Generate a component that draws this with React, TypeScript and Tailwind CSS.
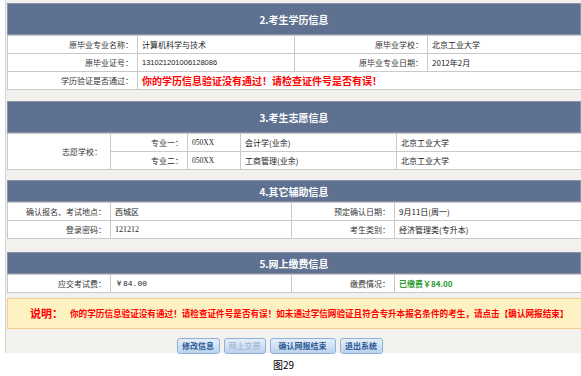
import React from 'react'

const cell = 'border border-[#c9c9c9] px-[4px] h-[18px] leading-none'
const label = cell + ' text-right text-[#333]'
const value = cell + ' text-left text-[#222]'
const plain = cell + ' text-left'

function Header({ title, tall }: { title: string; tall?: boolean }) {
  return (
    <div
      className={
        'bg-[#5f7191] border border-[#8a94a6] text-white font-bold text-[10px] flex items-center justify-center ' +
        (tall ? 'h-[32px]' : 'h-[22px]')
      }
    >
      {title}
    </div>
  )
}

function Btn({ children, disabled, w }: { children: React.ReactNode; disabled?: boolean; w: string }) {
  return (
    <button
      className={
        'h-[16px] rounded-[3px] border border-[#8fb1d8] bg-gradient-to-b from-[#e6effa] to-[#bcd3ee] text-[8px] font-bold leading-none ' +
        w +
        (disabled ? ' text-[#a9bdd6]' : ' text-[#2d5b93]')
      }
    >
      {children}
    </button>
  )
}

export default function App() {
  return (
    <div className="w-[581px] h-[376px] bg-white overflow-hidden font-['Noto_Sans_CJK_SC','Liberation_Sans',sans-serif] text-[8px]">
      <div className="ml-[5px] h-[353px] bg-[#f2f1ee] border-l border-[#d4d4d4] pl-[1px] pt-[3px]">
        {/* 2. 考生学历信息 */}
        <Header title="2.考生学历信息" tall />
        <table className="w-[575px] table-fixed border-collapse bg-white">
          <colgroup>
            <col className="w-[130px]" />
            <col className="w-[157px]" />
            <col className="w-[133px]" />
            <col />
          </colgroup>
          <tbody>
            <tr>
              <td className={label}>原毕业专业名称：</td>
              <td className={value}>计算机科学与技术</td>
              <td className={label}>原毕业学校：</td>
              <td className={value}>北京工业大学</td>
            </tr>
            <tr>
              <td className={label}>原毕业证号：</td>
              <td className={value + " text-[7.5px] font-['Liberation_Sans',sans-serif]"}>131021201006128086</td>
              <td className={label}>原毕业专业日期：</td>
              <td className={value}>2012年2月</td>
            </tr>
            <tr>
              <td className={label}>学历验证是否通过：</td>
              <td colSpan={3} className={plain + ' text-[#ff0000] font-bold text-[10px]'}>
                你的学历信息验证没有通过！请检查证件号是否有误！
              </td>
            </tr>
          </tbody>
        </table>

        {/* 3. 考生志愿信息 */}
        <div className="mt-[11px]">
          <Header title="3.考生志愿信息" tall />
          <table className="w-[575px] table-fixed border-collapse bg-white">
            <colgroup>
              <col className="w-[103px]" />
              <col className="w-[77px]" />
              <col className="w-[53px]" />
              <col className="w-[156px]" />
              <col />
            </colgroup>
            <tbody>
              <tr>
                <td rowSpan={2} className={label + ' pr-[8px]'}>志愿学校：</td>
                <td className={label}>专业一：</td>
                <td className={value + " text-[7.5px] font-['Liberation_Serif',serif]"}>050XX</td>
                <td className={value}>会计学(业余)</td>
                <td className={value}>北京工业大学</td>
              </tr>
              <tr>
                <td className={label}>专业二：</td>
                <td className={value + " text-[7.5px] font-['Liberation_Serif',serif]"}>050XX</td>
                <td className={value}>工商管理(业余)</td>
                <td className={value}>北京工业大学</td>
              </tr>
            </tbody>
          </table>
        </div>

        {/* 4. 其它辅助信息 */}
        <div className="mt-[10px]">
          <Header title="4.其它辅助信息" />
          <table className="w-[575px] table-fixed border-collapse bg-white">
            <colgroup>
              <col className="w-[103px]" />
              <col className="w-[181px]" />
              <col className="w-[103px]" />
              <col />
            </colgroup>
            <tbody>
              <tr>
                <td className={label}>确认报名、考试地点：</td>
                <td className={value}>西城区</td>
                <td className={label}>预定确认日期：</td>
                <td className={value}>9月11日(周一)</td>
              </tr>
              <tr>
                <td className={label}>登录密码：</td>
                <td className={value + " text-[8px] font-['Liberation_Serif',serif]"}>121212</td>
                <td className={label}>考生类别：</td>
                <td className={value}>经济管理类(专升本)</td>
              </tr>
            </tbody>
          </table>
        </div>

        {/* 5. 网上缴费信息 */}
        <div className="mt-[13px]">
          <Header title="5.网上缴费信息" />
          <table className="w-[575px] table-fixed border-collapse bg-white">
            <colgroup>
              <col className="w-[103px]" />
              <col className="w-[181px]" />
              <col className="w-[103px]" />
              <col />
            </colgroup>
            <tbody>
              <tr>
                <td className={label}>应交考试费：</td>
                <td className={value + " font-['Liberation_Mono',monospace]"}>￥84.00</td>
                <td className={label}>缴费情况：</td>
                <td className={plain + ' text-[#2a9a2a] font-semibold'}>已缴费￥84.00</td>
              </tr>
            </tbody>
          </table>
        </div>

        {/* 说明 */}
        <div className="mt-[5px] w-[575px] h-[31px] bg-[#fff2c2] border border-[#f0d08a] flex items-center pl-[22px] text-[#ff0000] font-bold">
          <span className="text-[11px] w-[40px]">说明：</span>
          <span className="text-[8.6px] whitespace-nowrap">
            你的学历信息验证没有通过！请检查证件号是否有误！如未通过学信网验证且符合专升本报名条件的考生，请点击【确认网报结束】
          </span>
        </div>

        {/* 按钮 */}
        <div className="mt-[9px] flex justify-center gap-[4px] w-[575px] pr-[30px]">
          <Btn w="w-[43px]">修改信息</Btn>
          <Btn w="w-[42px]" disabled>网上交费</Btn>
          <Btn w="w-[66px]">确认网报结束</Btn>
          <Btn w="w-[43px]">退出系统</Btn>
        </div>
      </div>
      <div className="mt-[4px] text-center text-[10px] text-black pr-[14px]">图29</div>
    </div>
  )
}
